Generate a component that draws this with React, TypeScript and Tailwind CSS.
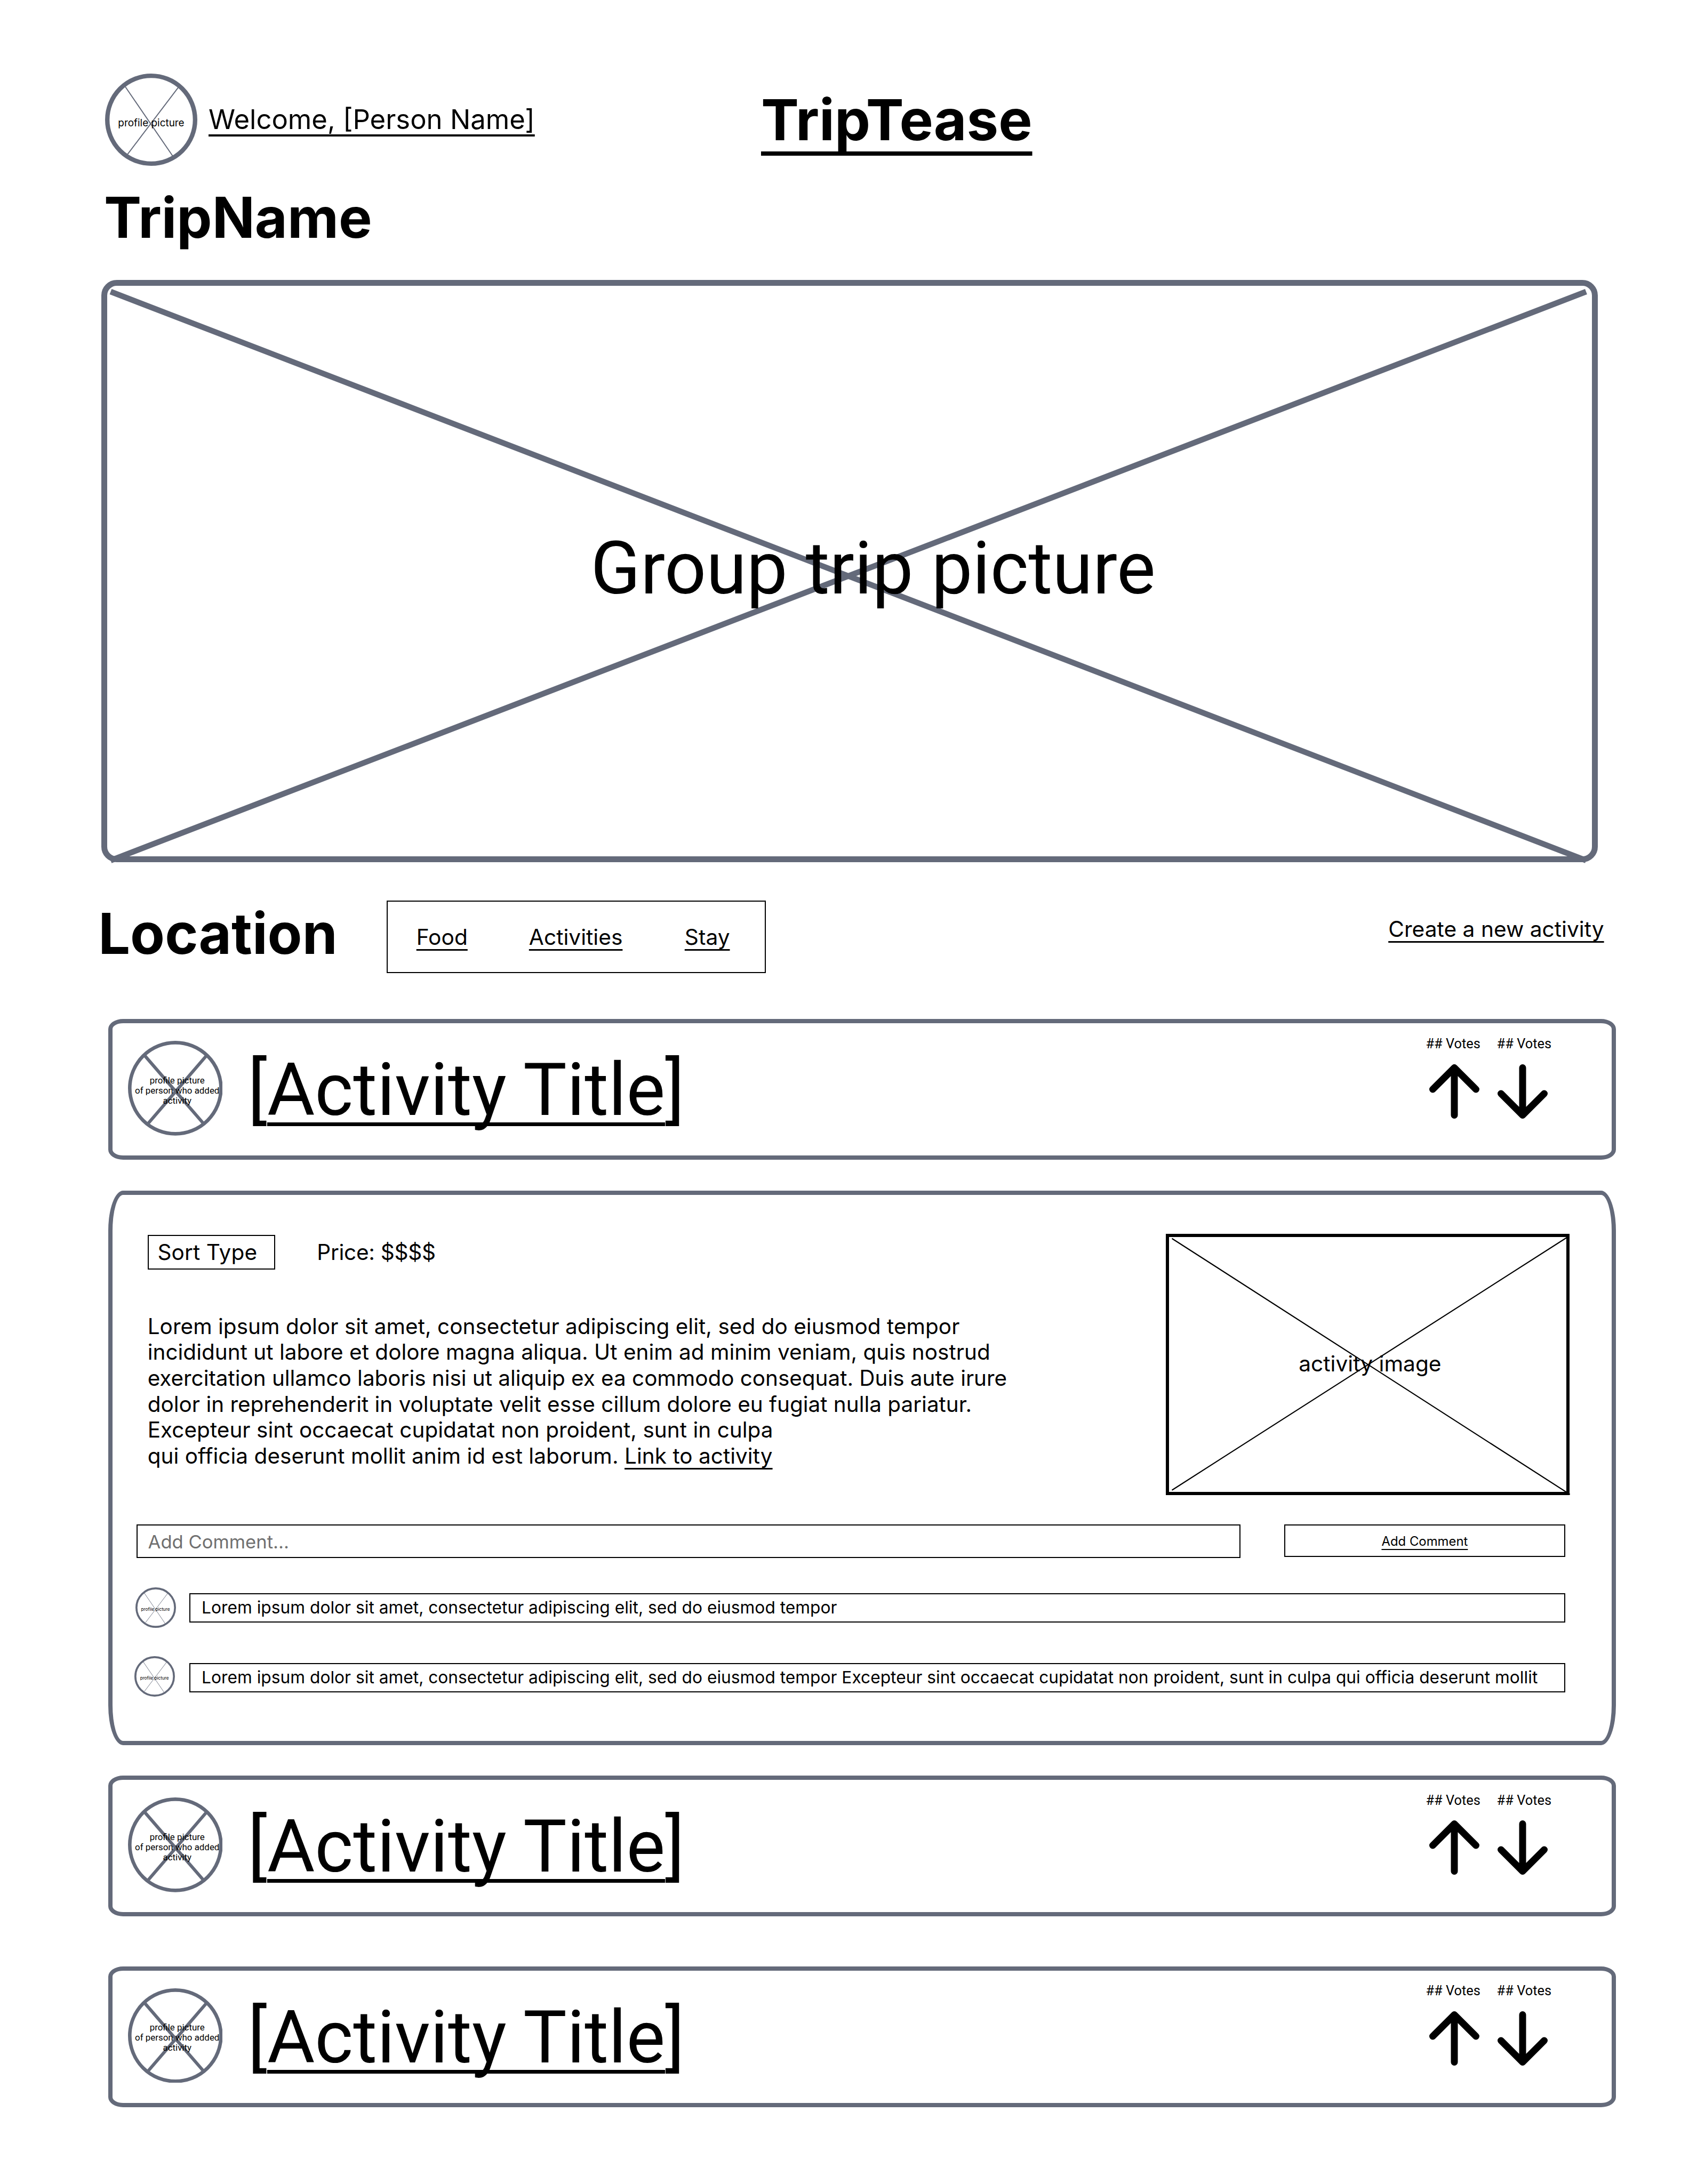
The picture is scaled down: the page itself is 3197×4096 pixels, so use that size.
import type { ReactNode } from "react";

const SLATE = "#646a7a";

/** Round picture placeholder shown beside people's names and comments. */
function PersonAvatar({ className, textClass }: { className: string; textClass: string }) {
  return (
    <div className={`grid shrink-0 place-items-center ${className}`}>
      <svg viewBox="0 0 245 245" className="size-full [grid-area:1/1]" fill="none" stroke={SLATE}>
        <circle cx="122.5" cy="122.5" r="116.6" strokeWidth="11.8" />
        <path d="M53.8 35.1 179.5 218.8M194.5 36.7 60 213.9" strokeWidth="2.8" />
      </svg>
      <span className={`whitespace-nowrap [grid-area:1/1] ${textClass}`}>profile picture</span>
    </div>
  );
}

function AuthorAvatar() {
  return (
    <div className="mt-[32.9px] grid size-[177.7px] shrink-0 place-items-center">
      <svg viewBox="0 0 252 252" className="size-full [grid-area:1/1]" fill="none" stroke={SLATE}>
        <circle cx="126" cy="126" r="121.3" strokeWidth="9.4" />
        <path d="M43.9 38.8 202.9 222.5M209.2 38.8 51.3 222.5" strokeWidth="8.6" />
      </svg>
      <p className="relative top-[4.2px] left-[3.6px] text-center font-[Roboto,sans-serif] text-[16.9px] leading-[19.05px] whitespace-nowrap [grid-area:1/1]">
        profile picture
        <br />
        of person who added
        <br />
        activity
      </p>
    </div>
  );
}

function Votes({ direction, className }: { direction: "up" | "down"; className: string }) {
  return (
    <div className={`mt-[23.7px] shrink-0 ${className}`}>
      <p className="-ml-px font-[Roboto,sans-serif] text-[25.4px] leading-[29px] whitespace-nowrap">## Votes</p>
      <svg
        viewBox="0 0 94 102"
        className={direction === "up" ? "mt-[23.6px] ml-[5.3px] h-[102px] w-[94px]" : "mt-[23.6px] h-[102px] w-[94px] rotate-180"}
        fill="none"
        stroke="#000"
        strokeWidth="13"
        strokeLinecap="round"
        strokeLinejoin="round"
      >
        <path d="M47 95.5V6.5M6.5 47 47 6.5 87.5 47" />
      </svg>
    </div>
  );
}

function ActivityCard({ className }: { className: string }) {
  return (
    <article
      className={`ml-[203px] flex h-[264px] w-[2827px] items-start rounded-[28px/19px] border-8 border-[#646a7a] pl-[28.8px] ${className}`}
    >
      <AuthorAvatar />
      <h2 className="mt-[45px] ml-[47.1px] font-[Roboto,sans-serif] text-[137.1px] leading-[160px] whitespace-nowrap">
        [<span className="underline decoration-[7px] underline-offset-[13.5px] [text-decoration-skip-ink:none]">Activity Title</span>]
      </h2>
      <Votes direction="up" className="ml-auto w-[133.2px]" />
      <Votes direction="down" className="w-[214.4px]" />
    </article>
  );
}

function Tab({ children, className = "" }: { children: ReactNode; className?: string }) {
  return (
    <a
      className={`text-[40.7px] leading-[49px] whitespace-nowrap underline decoration-[3px] underline-offset-[8px] [text-decoration-skip-ink:none] ${className}`}
    >
      {children}
    </a>
  );
}

function Comment({ children, className, boxClass }: { children: ReactNode; className: string; boxClass: string }) {
  return (
    <div className={`flex h-[76px] items-start ${className}`}>
      <PersonAvatar className="size-[76px]" textClass="relative top-[2.8px] text-[8.2px] leading-[10px]" />
      <p
        className={`h-[55px] border-2 border-black pt-[6.3px] pl-[21px] text-[31.72px] leading-[38px] whitespace-nowrap ${boxClass}`}
      >
        {children}
      </p>
    </div>
  );
}

function ActivityDetails() {
  return (
    <section className="mt-[57.6px] ml-[203px] h-[1040px] w-[2827px] rounded-[28px/75px] border-8 border-[#646a7a]">
      <div className="flex items-start pt-[72.5px] pl-[65.7px]">
        <div className="w-[1909.3px] shrink-0 pt-[2px]">
          <div className="flex items-start text-[40.6px] leading-[49px]">
            <span className="h-[65.5px] w-[239px] border-2 border-black pt-[6.3px] pl-[16.7px] tracking-[0.1px]">Sort Type</span>
            <span className="mt-[8.3px] ml-[78.6px] tracking-[-0.3px]">Price: $$$$</span>
          </div>
          <p className="mt-[82.5px] text-[40.5px] leading-[48.65px] whitespace-nowrap">
            <span className="tracking-[0.02px]">
              Lorem ipsum dolor sit amet, consectetur adipiscing elit, sed do eiusmod tempor
            </span>
            <br />
            incididunt ut labore et dolore magna aliqua. Ut enim ad minim veniam, quis nostrud
            <br />
            <span className="tracking-[-0.05px]">
              exercitation ullamco laboris nisi ut aliquip ex ea commodo consequat. Duis aute irure
            </span>
            <br />
            <span className="tracking-[-0.02px]">
              dolor in reprehenderit in voluptate velit esse cillum dolore eu fugiat nulla pariatur.
            </span>
            <br />
            <span className="tracking-[0.02px]">Excepteur sint occaecat cupidatat non proident, sunt in culpa</span>
            <br />
            <span className="tracking-[0.03px]">
              qui officia deserunt mollit anim id est laborum.{" "}
              <a className="underline decoration-[3px] underline-offset-[8px] [text-decoration-skip-ink:none]">Link to activity</a>
            </span>
          </p>
        </div>
        <div className="grid h-[490px] w-[757px] shrink-0 place-items-center border-6 border-black">
          <svg viewBox="6 6 745 478" className="size-full overflow-visible [grid-area:1/1]" fill="none" stroke="#000" strokeWidth="2.2">
            <path d="M11.5 8.7 757.7 488.7M752.2 6.7 11.5 480.7" />
          </svg>
          <span className="relative top-[-0.9px] left-[4.4px] text-[40.7px] leading-[49px] [grid-area:1/1]">activity image</span>
        </div>
      </div>

      <div className="mt-[55.2px] ml-[44.6px] flex items-start">
        <div className="h-[63.3px] w-[2070px] border-2 border-black pt-[8.9px] pl-[20px] text-[34.6px] leading-[42px] text-[#707070]">
          Add Comment...
        </div>
        <button className="ml-[82.6px] flex h-[61.3px] w-[526.5px] items-start justify-center border-2 border-black pt-[15.5px] text-[23.9px] leading-[29px]">
          <span className="underline decoration-2 underline-offset-[5.5px]">Add Comment</span>
        </button>
      </div>

      <Comment className="mt-[55px] ml-[42.5px]" boxClass="mt-[10.8px] ml-[25.6px] w-[2579.6px]">
        Lorem ipsum dolor sit amet, consectetur adipiscing elit, sed do eiusmod tempor
      </Comment>
      <Comment className="mt-[53.1px] ml-[40.6px]" boxClass="mt-[12.6px] ml-[27.5px] w-[2579.6px]">
        Lorem ipsum dolor sit amet, consectetur adipiscing elit, sed do eiusmod tempor Excepteur sint occaecat cupidatat non
        proident, sunt in culpa qui officia deserunt mollit
      </Comment>
    </section>
  );
}

export default function App() {
  return (
    <main className="flex h-[4096px] w-[3197px] flex-col overflow-hidden bg-white font-[Inter,sans-serif] text-black">
      <header className="flex items-start pt-[137.5px] pl-[197px]">
        <PersonAvatar className="size-[173px]" textClass="relative top-[6.3px] text-[18.9px] leading-[23px]" />
        <div className="mt-[55.5px] ml-[21px] w-[1036px] shrink-0 text-[50.8px] leading-[61px]">
          <span className="underline decoration-[3.5px] underline-offset-[10px] [text-decoration-skip-ink:none]">
            Welcome, [Person Name]
          </span>
        </div>
        <div className="mt-[22.7px] text-[106.4px] leading-[129px] font-bold">
          <span className="underline decoration-[7.5px] underline-offset-[20.6px] [text-decoration-skip-ink:none]">TripTease</span>
        </div>
      </header>

      <h1 className="mt-[33.1px] ml-[195px] text-[105.2px] leading-[128px] font-bold">TripName</h1>

      <section className="mt-[53.8px] ml-[189.5px] grid h-[1092px] w-[2806px] shrink-0 rounded-[29px] border-11 border-[#646a7a]">
        <svg viewBox="11 11 2784 1070" className="size-full overflow-visible [grid-area:1/1]" fill="none" stroke={SLATE} strokeWidth="10.7">
          <path d="M17.5 22 2784 1088.7M17.5 1088.7 2784 22" />
        </svg>
        <p className="relative mt-[449.6px] ml-[907px] font-[Roboto,sans-serif] text-[137.1px] leading-[160px] whitespace-nowrap [grid-area:1/1]">
          Group trip picture
        </p>
      </section>

      <nav className="mt-[68.2px] flex h-[139.1px] shrink-0 items-start pr-[189.4px] pl-[184.2px]">
        <h2 className="w-[541px] text-[106px] leading-[129px] font-bold">Location</h2>
        <div className="mt-[3.6px] flex h-[135.5px] w-[710.6px] items-start border-2 border-black pt-[42px] pl-[53.5px]">
          <Tab>Food</Tab>
          <Tab className="ml-[115px]">Activities</Tab>
          <Tab className="ml-[116.4px]">Stay</Tab>
        </div>
        <Tab className="mt-[32.6px] ml-auto">Create a new activity</Tab>
      </nav>

      <ActivityCard className="mt-[86.8px] shrink-0" />
      <ActivityDetails />
      <ActivityCard className="mt-[57.1px] shrink-0" />
      <ActivityCard className="mt-[93.5px] shrink-0" />
    </main>
  );
}
